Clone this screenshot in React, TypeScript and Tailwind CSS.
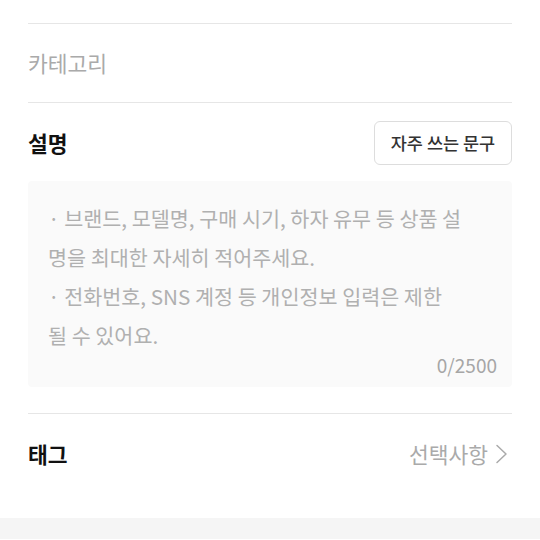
export default function App() {
  const font = { fontFamily: '"Noto Sans CJK KR", "Noto Sans", sans-serif' };
  return (
    <div className="w-[540px] h-[540px] bg-white overflow-hidden" style={font}>
      <div className="px-7 pt-[23px]">
        <div className="border-t border-[#e6e6e6]" />
        <div className="h-[79px] flex items-center border-b border-[#e6e6e6]">
          <span className="text-[21.5px] text-[#aaaaaa]">카테고리</span>
        </div>
        <div className="pt-[18px] pb-[26px] border-b border-[#e6e6e6]">
          <div className="flex items-center justify-between">
            <span className="text-[21.5px] font-bold text-[#111111]">설명</span>
            <button className="w-[138px] h-[44px] rounded-md border border-[#dddddd] bg-white text-[17.5px] font-medium text-[#333333]">
              자주 쓰는 문구
            </button>
          </div>
          <div className="mt-4 h-[206px] rounded bg-[#fafafa] pl-5 pr-[15px] pt-[18px] flex flex-col">
            <div className="text-[20.7px] leading-[39px] text-[#b0b0b0] whitespace-nowrap">
              <div>· 브랜드, 모델명, 구매 시기, 하자 유무 등 상품 설</div>
              <div>명을 최대한 자세히 적어주세요.</div>
              <div>· 전화번호, SNS 계정 등 개인정보 입력은 제한</div>
              <div>될 수 있어요.</div>
            </div>
            <div className="self-end text-[19px] leading-[20px] text-[#a6a6a6]">0/2500</div>
          </div>
        </div>
        <div className="h-[80px] flex items-center justify-between">
          <span className="text-[21.5px] font-bold text-[#111111]">태그</span>
          <div className="flex items-center gap-[6px] pr-[3px]">
            <span className="text-[21.5px] text-[#aaaaaa]">선택사항</span>
            <svg width="15" height="22" viewBox="0 0 15 22" fill="none">
              <polyline points="3,2.5 12,11 3,19.5" stroke="#aaaaaa" strokeWidth="1.5" strokeLinecap="round" strokeLinejoin="round" />
            </svg>
          </div>
        </div>
      </div>
      <div className="h-6" />
      <div className="h-[21px] bg-[#f5f5f5]" />
    </div>
  );
}
